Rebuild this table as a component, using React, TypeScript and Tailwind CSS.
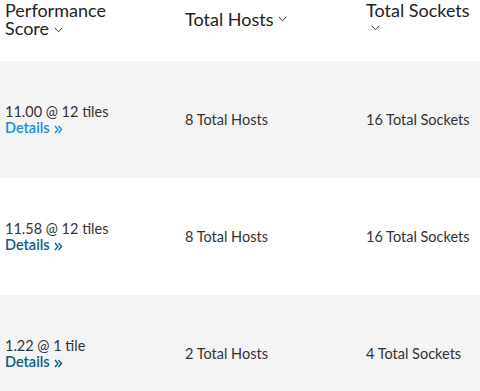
// Hosts comparison table: sortable header plus three result rows.

const rows = [
  { score: '11.00 @ 12 tiles', hosts: '8 Total Hosts', sockets: '16 Total Sockets', active: true },
  { score: '11.58 @ 12 tiles', hosts: '8 Total Hosts', sockets: '16 Total Sockets', active: false },
  { score: '1.22 @ 1 tile', hosts: '2 Total Hosts', sockets: '4 Total Sockets', active: false },
];

function Chevron() {
  return (
    <svg width="9" height="6" viewBox="0 0 9 6" className="inline-block ml-[5px] align-middle" aria-hidden="true">
      <path d="M0.8 0.8 L4.5 4.8 L8.2 0.8" fill="none" stroke="#333" strokeWidth="1" />
    </svg>
  );
}

function Arrows() {
  return (
    <svg width="9" height="9" viewBox="0 0 9 9" className="inline-block ml-[4px] align-[-1px]" aria-hidden="true">
      <path d="M1 1 L4 4.5 L1 8 M4.5 1 L7.5 4.5 L4.5 8" fill="none" stroke="currentColor" strokeWidth="1.4" />
    </svg>
  );
}

export default function App() {
  return (
    <div className="w-[480px] h-[391px] overflow-hidden bg-white text-[#333]" style={{ fontFamily: 'Lato, "Open Sans", sans-serif' }}>
      <div className="grid grid-cols-[180px_181px_1fr] h-[61px] items-start text-[18px] leading-[18px] text-[#222]">
        <div className="pl-[5px] pt-[1px]">
          <div>Performance</div>
          <div>
            Score<Chevron />
          </div>
        </div>
        <div className="pl-[5px] h-[38px] flex items-center">
          Total Hosts<Chevron />
        </div>
        <div className="pl-[5px] pt-[1px]">
          <div>Total Sockets</div>
          <div className="h-[18px] flex items-center">
            <Chevron />
          </div>
        </div>
      </div>
      {rows.map((r, i) => (
        <div
          key={i}
          className={`grid grid-cols-[180px_181px_1fr] h-[117px] items-center text-[14.5px] leading-[16px] ${i % 2 === 0 ? 'bg-[#f4f4f4]' : 'bg-white'}`}
        >
          <div className="pl-[5px]">
            <div>{r.score}</div>
            <a href="#" className={`font-semibold ${r.active ? 'text-[#1a8ed6]' : 'text-[#0e5a8e]'}`}>
              Details<Arrows />
            </a>
          </div>
          <div className="pl-[5px]">{r.hosts}</div>
          <div className="pl-[5px]">{r.sockets}</div>
        </div>
      ))}
    </div>
  );
}
